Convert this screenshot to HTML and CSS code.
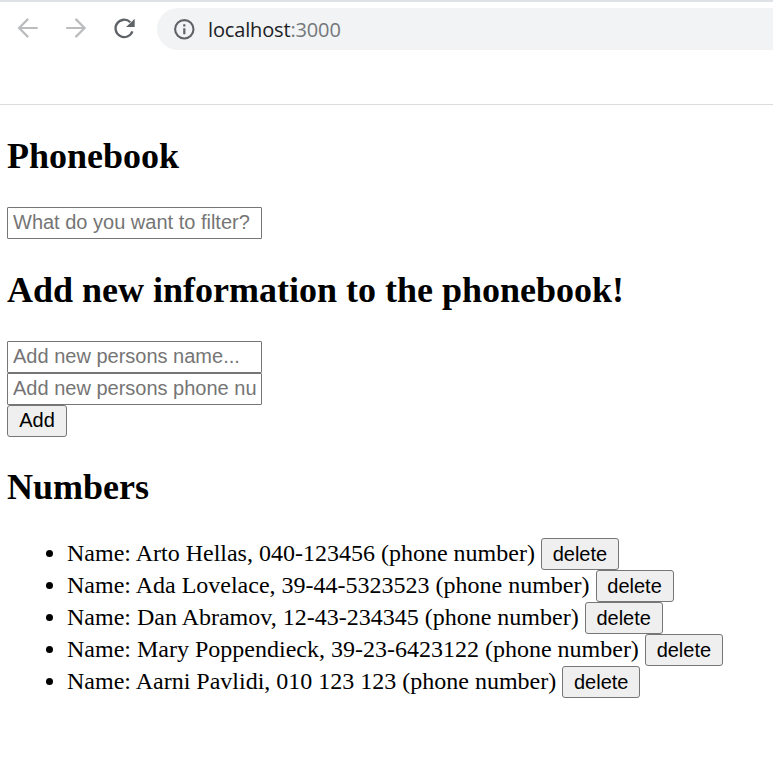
FILE: index.html
```html
<!DOCTYPE html>
<html lang="en">
<head>
<meta charset="utf-8">
<title>Phonebook</title>
<link rel="stylesheet" href="styles.css">
</head>
<body>
<header class="browser">
  <nav class="toolbar">
    <svg class="nav-icon" width="24" height="24" viewBox="0 0 24 24" fill="none" stroke="#babcbe" stroke-width="2.2"><path d="M21.7 11H3.7M12.2 1.9 3.1 11l9.1 9.1"/></svg>
    <svg class="nav-icon" width="24" height="24" viewBox="0 0 24 24" fill="none" stroke="#babcbe" stroke-width="2.2"><path d="M2.2 11h18M11.5 1.9l9.1 9.1-9.1 9.1"/></svg>
    <svg class="nav-icon" width="24" height="24" viewBox="0 0 24 24"><path d="M20.4 14.4A8.7 8.7 0 1 1 18.3 5.2" fill="none" stroke="#5f6368" stroke-width="2.3"/><path d="M22.7 1.7v8.4h-8.6z" fill="#5f6368"/></svg>
    <div class="address">
      <svg class="info" width="22" height="22" viewBox="0 0 22 22"><circle cx="11.3" cy="11.3" r="9.2" fill="none" stroke="#5f6368" stroke-width="2.1"/><path d="M10.2 6.3h2.2v2.2h-2.2zM10.2 10.2h2.2v6h-2.2z" fill="#5f6368"/></svg>
      <span class="url">localhost<span class="port">:3000</span></span>
    </div>
  </nav>
</header>
<main>
  <h2>Phonebook</h2>
  <input placeholder="What do you want to filter?">
  <h2>Add new information to the phonebook!</h2>
  <form>
    <input placeholder="Add new persons name...">
    <input placeholder="Add new persons phone number...">
    <button class="add" type="button">Add</button>
  </form>
  <h2 class="numbers">Numbers</h2>
  <ul>
    <li><span>Name: Arto Hellas, 040-123456 (phone number)</span> <button type="button">delete</button></li>
    <li><span>Name: Ada Lovelace, 39-44-5323523 (phone number)</span> <button type="button">delete</button></li>
    <li><span>Name: Dan Abramov, 12-43-234345 (phone number)</span> <button type="button">delete</button></li>
    <li><span>Name: Mary Poppendieck, 39-23-6423122 (phone number)</span> <button type="button">delete</button></li>
    <li><span>Name: Aarni Pavlidi, 010 123 123 (phone number)</span> <button type="button">delete</button></li>
  </ul>
</main>
</body>
</html>
```
FILE: styles.css
```css
* { box-sizing: border-box; }
body {
  margin: 0;
  background: #fff;
  color: #000;
  font: 24px/30px "Liberation Serif", "Times New Roman", serif;
  overflow: hidden;
}
.browser {
  height: 105px;
  padding-top: 6px;
  border-top: 2px solid #dee1e6;
  border-bottom: 1px solid #dadce0;
}
.toolbar {
  display: flex;
  align-items: center;
  height: 42px;
  padding-left: 16px;
}
.nav-icon { flex: none; margin-right: 24px; }
.address {
  display: flex;
  flex: 1;
  align-items: center;
  height: 42px;
  margin-left: -3px;
  padding-left: 16px;
  border-radius: 21px 0 0 21px;
  background: #f1f3f4;
}
.info { margin-right: 13px; }
.url {
  padding-top: 2px;
  color: #202124;
  font: 20px/28px "Open Sans", sans-serif;
  letter-spacing: -0.15px;
}
.port { color: #74777b; }
main { padding-left: 7px; }
h2 {
  height: 42px;
  margin: 31px 0 29px;
  font-size: 36px;
  line-height: 40px;
}
.numbers { margin: 30px 0 29px; }
input {
  display: block;
  width: 255px;
  height: 32px;
  padding: 0 5px 2px;
  border: 1px solid #767676;
  border-radius: 1px;
  background: #fff;
  font: 20px "Liberation Sans", Arial, sans-serif;
}
input::placeholder { color: #757575; opacity: 1; }
form { margin: 0; }
button {
  display: block;
  width: 78px;
  height: 32px;
  padding: 0;
  border: 1px solid #767676;
  border-radius: 3px;
  background: #efefef;
  color: #000;
  font: 20px "Liberation Sans", Arial, sans-serif;
}
.add { width: 60px; padding-bottom: 2px; }
ul { margin: 0; padding-left: 60px; }
li { height: 32px; white-space: nowrap; }
li button { display: inline-block; vertical-align: top; }
```
